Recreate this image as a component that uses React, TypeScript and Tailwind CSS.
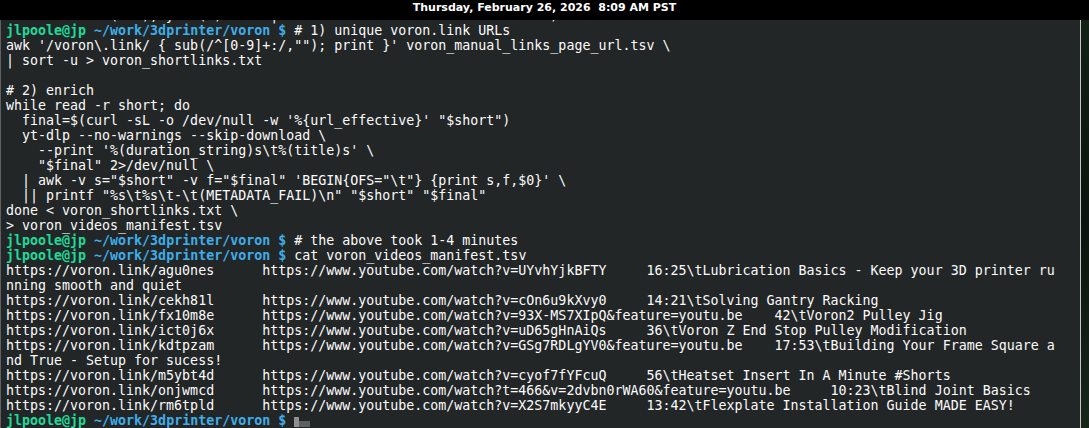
const mono = '"DejaVu Sans Mono", "Liberation Mono", monospace'

// the line above the first prompt is scrolled off, only its descenders peek out
function hiddenLine() {
  const marks: Record<number, string> = { 13: '(', 17: ')', 18: ',', 20: 'y', 24: '(', 26: ')', 33: '|', 68: ')' }
  let s = ''
  for (let i = 0; i < 70; i++) s += marks[i] ?? ' '
  return s
}

function Prompt() {
  return (
    <>
      <span className="font-bold text-[#1cdc9a]">jlpoole@jp</span>{' '}
      <span className="font-bold text-[#3daee9]">~/work/3dprinter/voron $</span>
    </>
  )
}

const script = [
  String.raw`awk '/voron\.link/ { sub(/^[0-9]+:/,""); print }' voron_manual_links_page_url.tsv \ `,
  '| sort -u > voron_shortlinks.txt',
  '',
  '# 2) enrich',
  'while read -r short; do',
  String.raw`  final=$(curl -sL -o /dev/null -w '%{url_effective}' "$short")`,
  String.raw`  yt-dlp --no-warnings --skip-download \ `,
  String.raw`    --print '%(duration_string)s\t%(title)s' \ `,
  String.raw`    "$final" 2>/dev/null \ `,
  String.raw`  | awk -v s="$short" -v f="$final" 'BEGIN{OFS="\t"} {print s,f,$0}' \ `,
  String.raw`  || printf "%s\t%s\t-\t(METADATA_FAIL)\n" "$short" "$final"`,
  String.raw`done < voron_shortlinks.txt \ `,
  '> voron_videos_manifest.tsv',
]

const manifest = [
  String.raw`https://voron.link/agu0nes      https://www.youtube.com/watch?v=UYvhYjkBFTY     16:25\tLubrication Basics - Keep your 3D printer ru`,
  'nning smooth and quiet',
  String.raw`https://voron.link/cekh81l      https://www.youtube.com/watch?v=cOn6u9kXvy0     14:21\tSolving Gantry Racking`,
  String.raw`https://voron.link/fx10m8e      https://www.youtube.com/watch?v=93X-MS7XIpQ&feature=youtu.be    42\tVoron2 Pulley Jig`,
  String.raw`https://voron.link/ict0j6x      https://www.youtube.com/watch?v=uD65gHnAiQs     36\tVoron Z End Stop Pulley Modification`,
  String.raw`https://voron.link/kdtpzam      https://www.youtube.com/watch?v=GSg7RDLgYV0&feature=youtu.be    17:53\tBuilding Your Frame Square a`,
  'nd True - Setup for sucess!',
  String.raw`https://voron.link/m5ybt4d      https://www.youtube.com/watch?v=cyof7fYFcuQ     56\tHeatset Insert In A Minute #Shorts`,
  String.raw`https://voron.link/onjwmcd      https://www.youtube.com/watch?t=466&v=2dvbn0rWA60&feature=youtu.be     10:23\tBlind Joint Basics`,
  String.raw`https://voron.link/rm6tpld      https://www.youtube.com/watch?v=X2S7mkyyC4E     13:42\tFlexplate Installation Guide MADE EASY!`,
]

export default function App() {
  return (
    <div className="w-[1089px] h-[428px] overflow-hidden flex flex-col bg-black">
      {/* Panel clock */}
      <div
        className="h-[20px] shrink-0 bg-black flex justify-center pt-px text-white font-bold text-[11px] leading-[13px]"
        style={{ fontFamily: '"DejaVu Sans", sans-serif' }}
      >
        Thursday, February 26, 2026&nbsp;&nbsp;8:09 AM PST
      </div>

      <div className="flex flex-1 min-h-0">
        {/* Terminal */}
        <div className="w-[1081px] shrink-0 overflow-hidden bg-[#232627] border-l border-[#5f6263] border-r border-r-[#c4c4c4]">
          <div
            className="-mt-[12px] pl-[5px] whitespace-pre text-[13.3px] leading-[15px] text-[#fcfcfc]"
            style={{ fontFamily: mono }}
          >
            <div>{hiddenLine()}</div>
            <div>
              <Prompt /> # 1) unique voron.link URLs
            </div>
            {script.map((line, i) => (
              <div key={i}>{line === '' ? ' ' : line}</div>
            ))}
            <div>
              <Prompt /> # the above took 1-4 minutes
            </div>
            <div>
              <Prompt /> cat voron_videos_manifest.tsv
            </div>
            {manifest.map((line, i) => (
              <div key={i}>{line}</div>
            ))}
            <div>
              <Prompt />{' '}
              <span className="inline-block align-[-2px] w-[5px] h-[10px] bg-[#8e9091]" />
              <span className="inline-block align-[-2px] w-[11px] h-[6px] bg-[#5d6061]" />
            </div>
          </div>
        </div>

        {/* Desktop wallpaper peeking out */}
        <div className="flex-1 bg-gradient-to-b from-[#122016] via-[#0b140e] to-[#18261a]" />
      </div>
    </div>
  )
}
